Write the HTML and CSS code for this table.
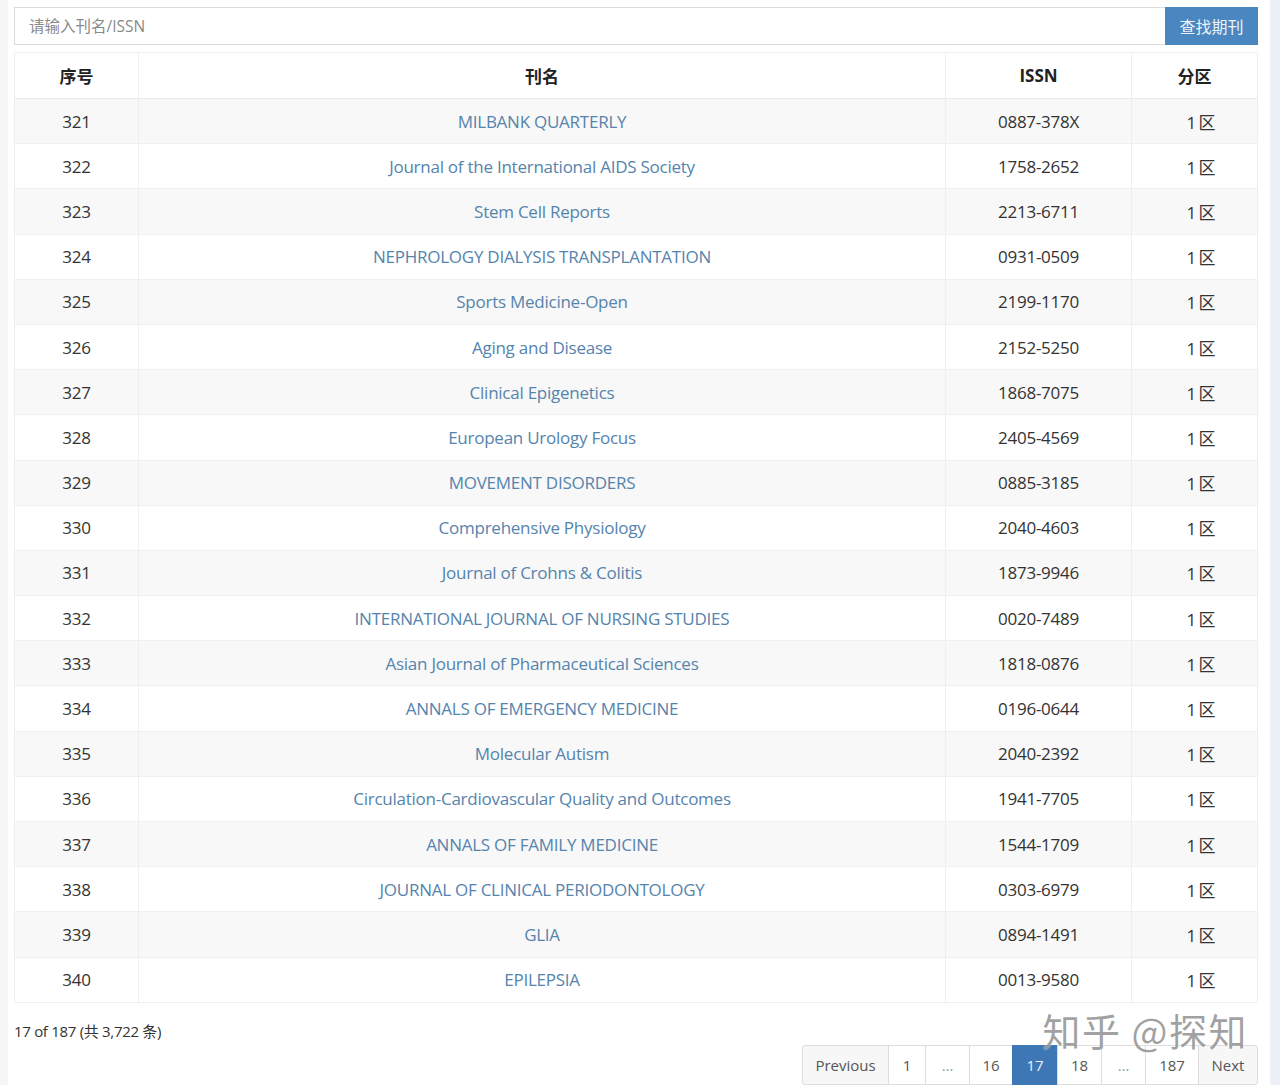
FILE: index.html
```html
<!DOCTYPE html>
<html lang="zh-CN">
<head>
<meta charset="utf-8">
<title>期刊列表</title>
<link rel="stylesheet" href="styles.css">
</head>
<body>
<div class="page">
  <div class="strip-left"></div>
  <main class="main">
    <div class="search">
      <input class="search-input" type="text" placeholder="请输入刊名/ISSN">
      <button class="search-btn">查找期刊</button>
    </div>
    <table class="journals">
      <thead>
        <tr><th class="c-no">序号</th><th class="c-name">刊名</th><th class="c-issn">ISSN</th><th class="c-zone">分区</th></tr>
      </thead>
      <tbody>
        <tr><td>321</td><td><a href="#">MILBANK QUARTERLY</a></td><td>0887-378X</td><td class="zone">1 区</td></tr>
        <tr><td>322</td><td><a href="#">Journal of the International AIDS Society</a></td><td>1758-2652</td><td class="zone">1 区</td></tr>
        <tr><td>323</td><td><a href="#">Stem Cell Reports</a></td><td>2213-6711</td><td class="zone">1 区</td></tr>
        <tr><td>324</td><td><a href="#">NEPHROLOGY DIALYSIS TRANSPLANTATION</a></td><td>0931-0509</td><td class="zone">1 区</td></tr>
        <tr><td>325</td><td><a href="#">Sports Medicine-Open</a></td><td>2199-1170</td><td class="zone">1 区</td></tr>
        <tr><td>326</td><td><a href="#">Aging and Disease</a></td><td>2152-5250</td><td class="zone">1 区</td></tr>
        <tr><td>327</td><td><a href="#">Clinical Epigenetics</a></td><td>1868-7075</td><td class="zone">1 区</td></tr>
        <tr><td>328</td><td><a href="#">European Urology Focus</a></td><td>2405-4569</td><td class="zone">1 区</td></tr>
        <tr><td>329</td><td><a href="#">MOVEMENT DISORDERS</a></td><td>0885-3185</td><td class="zone">1 区</td></tr>
        <tr><td>330</td><td><a href="#">Comprehensive Physiology</a></td><td>2040-4603</td><td class="zone">1 区</td></tr>
        <tr><td>331</td><td><a href="#">Journal of Crohns &amp; Colitis</a></td><td>1873-9946</td><td class="zone">1 区</td></tr>
        <tr><td>332</td><td><a href="#">INTERNATIONAL JOURNAL OF NURSING STUDIES</a></td><td>0020-7489</td><td class="zone">1 区</td></tr>
        <tr><td>333</td><td><a href="#">Asian Journal of Pharmaceutical Sciences</a></td><td>1818-0876</td><td class="zone">1 区</td></tr>
        <tr><td>334</td><td><a href="#">ANNALS OF EMERGENCY MEDICINE</a></td><td>0196-0644</td><td class="zone">1 区</td></tr>
        <tr><td>335</td><td><a href="#">Molecular Autism</a></td><td>2040-2392</td><td class="zone">1 区</td></tr>
        <tr><td>336</td><td><a href="#">Circulation-Cardiovascular Quality and Outcomes</a></td><td>1941-7705</td><td class="zone">1 区</td></tr>
        <tr><td>337</td><td><a href="#">ANNALS OF FAMILY MEDICINE</a></td><td>1544-1709</td><td class="zone">1 区</td></tr>
        <tr><td>338</td><td><a href="#">JOURNAL OF CLINICAL PERIODONTOLOGY</a></td><td>0303-6979</td><td class="zone">1 区</td></tr>
        <tr><td>339</td><td><a href="#">GLIA</a></td><td>0894-1491</td><td class="zone">1 区</td></tr>
        <tr><td>340</td><td><a href="#">EPILEPSIA</a></td><td>0013-9580</td><td class="zone">1 区</td></tr>
      </tbody>
    </table>
    <div class="footer">
      <div class="info">17 of 187 (共 3,722 条)</div>
      <nav class="pager">
        <a class="pg pg-prev" href="#">Previous</a>
        <a class="pg w37" href="#">1</a>
        <span class="pg pg-ell">…</span>
        <a class="pg w43" href="#">16</a>
        <a class="pg active" href="#">17</a>
        <a class="pg w44" href="#">18</a>
        <span class="pg pg-ell">…</span>
        <a class="pg w53" href="#">187</a>
        <a class="pg pg-next" href="#">Next</a>
      </nav>
      <div class="watermark">知乎 @探知</div>
    </div>
  </main>
  <div class="strip-right"></div>
</div>
</body>
</html>
```
FILE: styles.css
```css
html, body {
  margin: 0;
  padding: 0;
  background: #ffffff;
}
body {
  font-family: "Open Sans", "Noto Sans CJK SC", sans-serif;
  color: #333333;
}
.page {
  display: flex;
  min-height: 1085px;
}
.strip-left {
  width: 8px;
  background: #f6f6f6;
  flex: none;
}
.strip-right {
  width: 10px;
  background: #edf1f7;
  flex: none;
}
.main {
  flex: 1;
  padding: 7px 12px 0 6px;
  position: relative;
}
.search {
  display: flex;
  height: 38px;
}
.search-input {
  flex: 1;
  box-sizing: border-box;
  height: 38px;
  border: 1px solid #dcdcdc;
  border-right: none;
  padding: 0 14px;
  font-family: "Open Sans", "Noto Sans CJK SC", sans-serif;
  font-size: 15.5px;
  color: #333;
  outline: none;
}
.search-input::placeholder {
  color: #8a8a8a;
}
.search-btn {
  width: 93px;
  height: 38px;
  border: none;
  background: #4a86bf;
  color: #eef3f9;
  font-family: "Noto Sans CJK SC", sans-serif;
  font-size: 16px;
  padding: 0;
}
.journals {
  margin-top: 7px;
  width: 100%;
  border-collapse: collapse;
  border: 1px solid #efefef;
  font-size: 17px;
}
.journals th {
  height: 44px;
  font-family: "Open Sans", "Noto Sans CJK SC", sans-serif;
  font-weight: 700;
  font-size: 17px;
  color: #222;
  background: #fff;
  border-left: 1px solid #efefef;
  border-bottom: 1px solid #eaeaea;
  padding: 0 0 1px 0;
}
.journals td {
  height: 44.2px;
  text-align: center;
  padding: 0;
  border-left: 1px solid #efefef;
  border-top: 1px solid #f0f0f0;
  color: #333;
  font-family: "Open Sans", "Noto Sans CJK SC", sans-serif;
  font-weight: 400;
  letter-spacing: -0.25px;
}
.journals tbody tr:nth-child(odd) td {
  background: #f8f8f8;
}
.c-no { width: 123px; }
.c-issn { width: 185px; }
.c-zone { width: 125px; }
.journals a {
  color: #5584ad;
  text-decoration: none;
}
.zone {
  padding-left: 12px !important;
  letter-spacing: -1px !important;
}
.footer {
  position: relative;
  margin-top: 17px;
}
.info {
  font-size: 15px;
  color: #333;
  letter-spacing: -0.3px;
}
.pager {
  display: flex;
  justify-content: flex-end;
  margin-top: 4px;
}
.pg {
  box-sizing: border-box;
  height: 40px;
  line-height: 38px;
  padding: 0;
  border: 1px solid #dddddd;
  margin-left: -1px;
  background: #fff;
  color: #555;
  font-size: 15px;
  text-decoration: none;
  text-align: center;
}
.w37 { width: 38px; }
.w43 { width: 44px; }
.w44 { width: 45px; }
.w53 { width: 54px; }
.pg-prev {
  background: #f7f7f7;
  width: 87px;
  border-radius: 3px 0 0 3px;
}
.pg-next {
  background: #f7f7f7;
  width: 60px;
  border-radius: 0 3px 3px 0;
}
.pg-ell { color: #999; width: 45px; }
.active {
  width: 46px;
  background: #3d77b6;
  border-color: #3d77b6;
  color: #e8f0f8;
}
.watermark {
  position: absolute;
  right: 10px;
  top: -9px;
  font-family: "Noto Sans CJK SC", sans-serif;
  font-size: 38px;
  line-height: 38px;
  color: rgba(125, 125, 125, 0.72);
  letter-spacing: 1.5px;
  text-shadow: 0 0 2px rgba(255,255,255,0.9);
  pointer-events: none;
}
```
